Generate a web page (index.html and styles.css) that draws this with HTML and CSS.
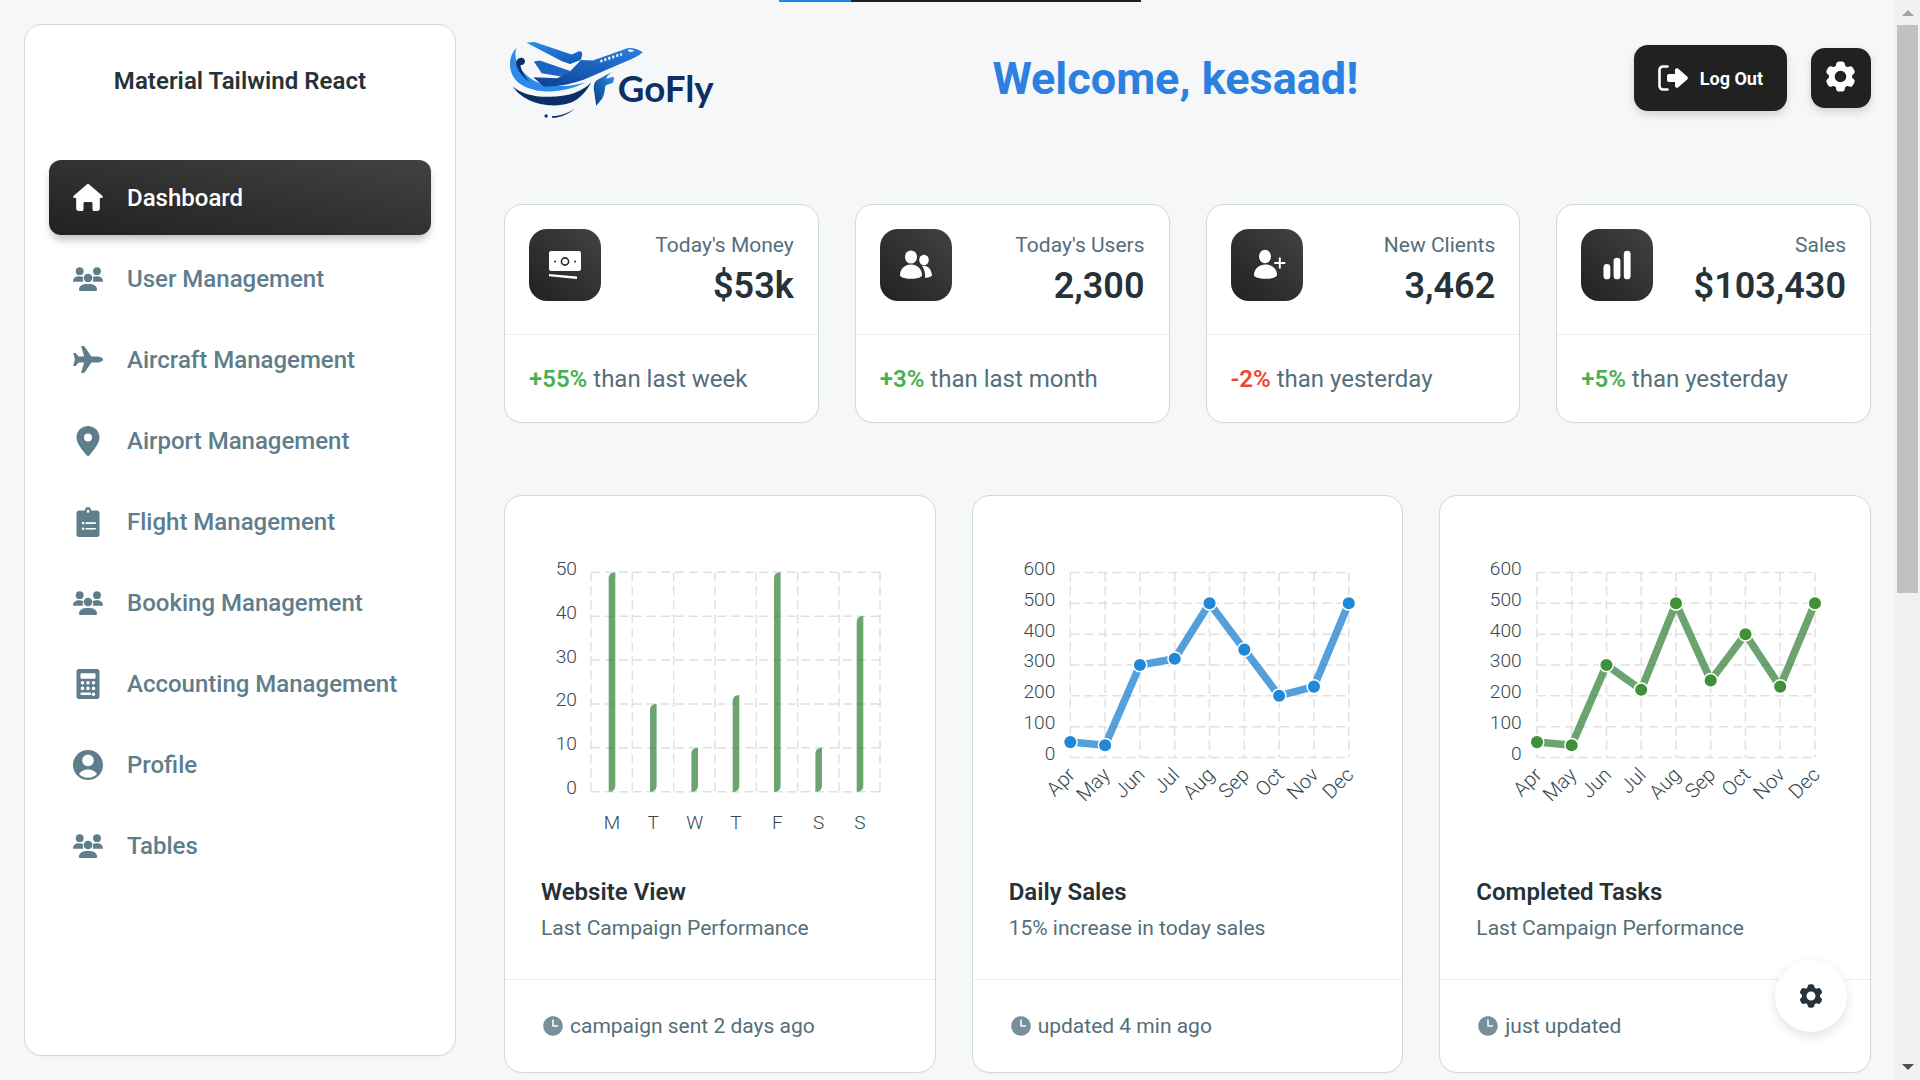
FILE: index.html
```html
<!DOCTYPE html>
<html lang="en">
<head>
<meta charset="utf-8">
<title>GoFly Dashboard</title>
<link rel="stylesheet" href="styles.css">
</head>
<body>
<svg class="defs" width="0" height="0" aria-hidden="true">
  <defs>
    <symbol id="i-users" viewBox="0 0 30 24">
      <circle cx="6.7" cy="4.2" r="3.9"/><circle cx="24" cy="4.2" r="3.9"/><circle cx="15" cy="11" r="4.3"/>
      <path d="M0 14.7C0 11 2.5 9.3 6.5 9.3c1.6 0 2.9.3 3.9.9-.8 1.2-.9 3.2-.1 4.5-.3 0-.5.1-.8.1H.7c-.4 0-.7 0-.7-.1z"/>
      <path d="M30 14.7C30 11 27.500 9.300 23.500 9.300c-1.600 0-2.900.3-3.900.9.8 1.200.9 3.200.1 4.500.3 0 .5.1.8.1h8.800c.4 0 .7 0 .7-.1z"/>
      <path d="M6 22.800C6 19 9 17 15 17s9 2 9 5.800c0 .8-.5 1.200-1.200 1.200H7.200C6.500 24 6 23.600 6 22.800z"/>
    </symbol>
    <symbol id="i-gear" viewBox="2 2 20 20">
      <path fill-rule="evenodd" d="M11.078 2.250c-.917 0-1.699.663-1.850 1.567L9.050 4.889c-.02.12-.115.26-.297.348a7.493 7.493 0 00-.986.57c-.166.115-.334.126-.45.083L6.300 5.508a1.875 1.875 0 00-2.282.819l-.922 1.597a1.875 1.875 0 00.432 2.385l.84.692c.095.078.17.229.154.43a7.598 7.598 0 000 1.139c.015.2-.059.352-.153.43l-.841.692a1.875 1.875 0 00-.432 2.385l.922 1.597a1.875 1.875 0 002.282.818l1.019-.382c.115-.043.283-.031.45.082.312.214.641.405.985.57.182.088.277.228.297.35l.178 1.071c.151.904.933 1.567 1.850 1.567h1.844c.916 0 1.699-.663 1.850-1.567l.178-1.072c.02-.12.114-.26.297-.349.344-.165.673-.356.985-.57.167-.114.335-.125.45-.082l1.020.382a1.875 1.875 0 002.280-.819l.923-1.597a1.875 1.875 0 00-.432-2.385l-.84-.692c-.095-.078-.17-.229-.154-.43a7.614 7.614 0 000-1.139c-.016-.2.059-.352.153-.43l.84-.692c.708-.582.891-1.590.433-2.385l-.922-1.597a1.875 1.875 0 00-2.282-.818l-1.020.382c-.114.043-.282.031-.449-.083a7.490 7.490 0 00-.985-.57c-.183-.087-.277-.227-.297-.348l-.179-1.072a1.875 1.875 0 00-1.850-1.567h-1.843zM12 15.750a3.750 3.750 0 100-7.500 3.750 3.750 0 000 7.500z"/>
    </symbol>
    <symbol id="i-clock" viewBox="2 2 20 20">
      <path fill-rule="evenodd" d="M12 2.250c-5.385 0-9.750 4.365-9.750 9.750s4.365 9.750 9.750 9.750 9.750-4.365 9.750-9.750S17.385 2.250 12 2.250zM12.750 6a.75.75 0 00-1.500 0v6c0 .414.336.75.75.75h4.500a.75.75 0 000-1.500h-3.750V6z"/>
    </symbol>
    <linearGradient id="lg-wing" x1="0" y1="0" x2="1" y2="1"><stop offset="0" stop-color="#2f8fea"/><stop offset="1" stop-color="#0f56b3"/></linearGradient>
    <linearGradient id="lg-body" x1="1" y1="0" x2="0" y2="1"><stop offset="0" stop-color="#2a80e2"/><stop offset="1" stop-color="#0b3f92"/></linearGradient>
    <linearGradient id="lg-fin" x1="1" y1="0" x2="0" y2="1"><stop offset="0" stop-color="#2f8fea"/><stop offset="1" stop-color="#0b3f8a"/></linearGradient>
  </defs>
</svg>

<div class="progress"><span class="progress-blue"></span><span class="progress-black"></span></div>

<div class="app">
  <div class="page">
    <aside class="sidebar">
      <h2 class="brand">Material Tailwind React</h2>
      <nav class="nav">
        <a class="nav-item active">
          <svg class="nav-icon" width="30" height="27" viewBox="0 0 30 27"><path d="M13.800.5c.7-.6 1.700-.6 2.400 0l13.100 11.200c.9.800.4 2.300-.8 2.300h-1.700v10.500c0 1.400-1.100 2.500-2.500 2.500h-3.400c-.8 0-1.400-.6-1.400-1.400v-6.100c0-.9-.7-1.600-1.600-1.600h-5.800c-.9 0-1.600.7-1.600 1.600v6.100c0 .8-.6 1.400-1.400 1.400H5.700c-1.400 0-2.500-1.100-2.500-2.500V14H1.500C.3 14-.2 12.500.7 11.700z"/></svg>
          <span>Dashboard</span>
        </a>
        <a class="nav-item"><svg class="nav-icon" width="30" height="24"><use href="#i-users"/></svg><span>User Management</span></a>
        <a class="nav-item">
          <svg class="nav-icon" width="30" height="27" viewBox="0 0 30 27"><path d="M30 13.500c0-2-3.700-3.100-6.700-3.100h-4.900L11.600.6C11.300.2 11 0 10.500 0H8.100l3 10.400H5.700L2.700 6.900H.2l1.700 6.600L.2 20.100h2.500l3-3.500h5.400l-3 10.400h2.400c.5 0 .8-.2 1.100-.6l6.800-9.800h4.900c3 0 6.700-1.100 6.700-3.100z"/></svg>
          <span>Aircraft Management</span>
        </a>
        <a class="nav-item">
          <svg class="nav-icon" width="23" height="30" viewBox="0 0 23 30"><path fill-rule="evenodd" d="M11.500 0C5.100 0 0 5.100 0 11.400c0 6.300 6.600 13.300 10.100 17.900.7.900 2.100.9 2.800 0C16.400 24.700 23 17.700 23 11.400 23 5.100 17.900 0 11.500 0zm0 15.400a4 4 0 110-8 4 4 0 010 8z"/></svg>
          <span>Airport Management</span>
        </a>
        <a class="nav-item">
          <svg class="nav-icon" width="23" height="30" viewBox="0 0 23 30"><path fill-rule="evenodd" d="M8.200 3.500C8.600 1.500 9.900 0 11.500 0s2.900 1.500 3.300 3.500h5.700c1.400 0 2.500 1.100 2.500 2.500v21.500c0 1.400-1.100 2.500-2.500 2.500h-18C1.100 30 0 28.900 0 27.500V6c0-1.400 1.100-2.500 2.500-2.500zM11.500 2.800a1.500 1.500 0 100 3 1.500 1.500 0 000-3zM9 15.300h10.300v1.600H9zm0 5.700h10.300v1.600H9zM5.300 16.100a1.300 1.300 0 102.600 0 1.300 1.300 0 00-2.600 0zm0 5.700a1.300 1.300 0 102.600 0 1.300 1.300 0 00-2.600 0z"/></svg>
          <span>Flight Management</span>
        </a>
        <a class="nav-item"><svg class="nav-icon" width="30" height="24"><use href="#i-users"/></svg><span>Booking Management</span></a>
        <a class="nav-item">
          <svg class="nav-icon" width="23" height="30" viewBox="0 0 23 30"><path fill-rule="evenodd" d="M2.500 0h18C21.900 0 23 1.100 23 2.500v25c0 1.400-1.100 2.500-2.500 2.500h-18C1.100 30 0 28.900 0 27.500v-25C0 1.100 1.100 0 2.500 0zM5 4.300c-.6 0-1 .4-1 1v3.400c0 .6.400 1 1 1h13c.6 0 1-.4 1-1V5.300c0-.6-.4-1-1-1zM6 12a1.800 1.800 0 100 3.600A1.800 1.800 0 006 12zm5.500 0a1.800 1.800 0 100 3.600 1.800 1.800 0 000-3.600zm5.500 0a1.800 1.800 0 100 3.600 1.800 1.800 0 000-3.600zM6 17.600a1.800 1.800 0 100 3.600 1.800 1.800 0 000-3.600zm5.500 0a1.800 1.800 0 100 3.600 1.800 1.800 0 000-3.600zm5.500 0a1.800 1.800 0 100 3.600 1.800 1.800 0 000-3.600zM5 23.400c-.6 0-1 .4-1 1v.6c0 .6.400 1 1 1h8.500c.6 0 1-.4 1-1v-.6c0-.6-.4-1-1-1zm12 0a1.800 1.800 0 100 3.600 1.800 1.800 0 000-3.600z"/></svg>
          <span>Accounting Management</span>
        </a>
        <a class="nav-item">
          <svg class="nav-icon" width="30" height="30" viewBox="2.250 2.250 19.500 19.500"><path fill-rule="evenodd" d="M18.685 19.097A9.723 9.723 0 0021.750 12c0-5.385-4.365-9.750-9.750-9.750S2.250 6.615 2.250 12a9.723 9.723 0 003.065 7.097A9.716 9.716 0 0012 21.750a9.716 9.716 0 006.685-2.653zm-12.540-1.285A7.486 7.486 0 0112 15a7.486 7.486 0 015.855 2.812A8.224 8.224 0 0112 20.250a8.224 8.224 0 01-5.855-2.438zM15.750 9a3.750 3.750 0 11-7.500 0 3.750 3.750 0 017.500 0z"/></svg>
          <span>Profile</span>
        </a>
        <a class="nav-item"><svg class="nav-icon" width="30" height="24"><use href="#i-users"/></svg><span>Tables</span></a>
      </nav>
    </aside>

    <main class="main">
      <header class="topbar">
        <svg class="logo" width="213" height="81" viewBox="42 112 638 244" role="img" aria-label="GoFly logo">
          <path fill="#2c8bea" d="M78 142C50 168 48 226 95 254c52 30 135 22 190-9-58 18-125 16-163-10C84 208 66 172 78 142z"/>
          <path fill="#0c2f68" d="M67 258c25 42 103 72 173 49 30-12 50-36 63-62-25 28-72 45-132 44-46 0-80-10-104-31z"/>
          <path fill="#0c2f68" d="M88 172c10-2 17 5 15 13-2 7-9 10-13 8 1 18 14 38 30 52-22-12-38-34-43-54-1-10 3-17 11-19z"/>
          <circle fill="#0c2f68" cx="167" cy="347" r="5"/>
          <path fill="#0c2f68" d="M185 347c25-1 48-8 68-23-17 16-40 27-67 29z"/>
          <path fill="url(#lg-wing)" d="M108 126l24-2 112 38 22-10c8-2 12 6 9 14l-4 12-32 12-24-8z"/>
          <path fill="#1b66c2" d="M130 183l18-3 94 32-16 18-72-12z"/>
          <path fill="url(#lg-body)" d="M458 155c-8-8-28-14-44-13L308 180l-36-2-36 38-36 17-72-3 32 28c40 2 80-6 120-20l120-52c26-10 46-20 58-31z"/>
          <path fill="#fff" d="M330 178l6-2 1 8-6 2zm12-4l6-2 1 8-6 2zm12-4l6-2 1 8-6 2zm12-4l6-2 1 8-6 2zm12-4l6-2 1 8-6 2zm12-3l5-2 1 8-5 2zM414 147c6-2 14 0 18 5l-14 2c-3-2-5-4-4-7z"/>
          <path fill="url(#lg-fin)" d="M366 214l-44 24c-10 6-12 16-11 30l7 48 18-22c7-12 8-27 10-39l22-8c4-8 4-14 2-18l-22 6c3-8 10-15 18-21z"/>
          <text class="logo-text" x="383" y="305" textLength="289" lengthAdjust="spacingAndGlyphs">GoFly</text>
        </svg>
        <h1 class="welcome">Welcome, kesaad!</h1>
        <div class="actions">
          <button class="btn-logout">
            <svg width="30" height="26" viewBox="0 0 30 26"><path d="M9.500 1.500H5A3.500 3.500 0 001.500 5v16A3.500 3.500 0 005 24.500h4.500" fill="none" stroke="#fff" stroke-width="2.600" stroke-linecap="round"/><path fill="#fff" d="M17 5c0-1.600 1.800-2.400 3-1.400l9.200 8c.9.800.9 2 0 2.800l-9.200 8c-1.200 1-3 .2-3-1.400v-4H11c-1.100 0-2-.9-2-2v-4c0-1.100.9-2 2-2h6z"/></svg>
            <span>Log Out</span>
          </button>
          <button class="btn-gear"><svg width="31" height="31"><use href="#i-gear"/></svg></button>
        </div>
      </header>

      <section class="stats">
        <article class="stat">
          <div class="stat-top">
            <div class="stat-icon"><svg width="72" height="72" viewBox="0 0 72 72"><rect x="20" y="22" width="32" height="20" rx="2" fill="#fff"/><circle cx="36" cy="32.500" r="3.600" fill="none" stroke="#2a2a2a" stroke-width="1.600"/><circle cx="26" cy="32.500" r="1" fill="#2a2a2a"/><circle cx="46" cy="32.500" r="1" fill="#2a2a2a"/><path fill="#fff" d="M20 45l28 2.400V50L20 47.200z"/></svg></div>
            <div class="stat-text"><p class="stat-label">Today's Money</p><p class="stat-value">$53k</p></div>
          </div>
          <p class="stat-foot"><b class="up">+55%</b> than last week</p>
        </article>
        <article class="stat">
          <div class="stat-top">
            <div class="stat-icon"><svg width="72" height="72" viewBox="0 0 72 72" fill="#fff"><ellipse cx="31" cy="28" rx="6" ry="6.600"/><ellipse cx="44" cy="31" rx="4.800" ry="5.200"/><path d="M20 46c0-6 5-10.500 11-10.500S42 40 42 46c0 2-4 3.800-11 3.800S20 48 20 46z"/><path d="M42 37c5-1.500 9 2 10 9 0 1.500-3 2.700-7 2.800 .6-4-.4-8.500-3-11.800z"/></svg></div>
            <div class="stat-text"><p class="stat-label">Today's Users</p><p class="stat-value">2,300</p></div>
          </div>
          <p class="stat-foot"><b class="up">+3%</b> than last month</p>
        </article>
        <article class="stat">
          <div class="stat-top">
            <div class="stat-icon"><svg width="72" height="72" viewBox="0 0 72 72" fill="#fff"><ellipse cx="34" cy="27.500" rx="6" ry="6.800"/><path d="M23 46c0-6 5-10.500 11.500-10.500S46 40 46 46c0 2-4.500 3.800-11.500 3.800S23 48 23 46z"/><path d="M47.800 28.500h2v4.500h4.500v2h-4.500v4.500h-2V35h-4.500v-2h4.500z"/></svg></div>
            <div class="stat-text"><p class="stat-label">New Clients</p><p class="stat-value">3,462</p></div>
          </div>
          <p class="stat-foot"><b class="down">-2%</b> than yesterday</p>
        </article>
        <article class="stat">
          <div class="stat-top">
            <div class="stat-icon"><svg width="72" height="72" viewBox="0 0 72 72" fill="#fff"><rect x="22.500" y="35" width="6.800" height="15.300" rx="3.400"/><rect x="32.600" y="28.700" width="6.800" height="21.600" rx="3.400"/><rect x="42.800" y="21.700" width="6.800" height="28.600" rx="3.400"/></svg></div>
            <div class="stat-text"><p class="stat-label">Sales</p><p class="stat-value">$103,430</p></div>
          </div>
          <p class="stat-foot"><b class="up">+5%</b> than yesterday</p>
        </article>
      </section>

      <section class="charts">
        <article class="chart-card">
          <svg class="chart" width="429" height="364" viewBox="505 496 429 364">
            <path class="grid" d="M591 572.300H880M591 616.200H880M591 660.100H880M591 703.900H880M591 747.800H880M591 791.700H880M591 572.300V791.700M632.300 572.300V791.700M673.700 572.300V791.700M715 572.300V791.700M756.300 572.300V791.700M797.700 572.300V791.700M839 572.300V791.700M880 572.300V791.700"/>
            <g class="bars">
              <path d="M608.700 791.700V578.300Q608.700 572.300 615.300 572.300V785.700Q615.300 791.700 608.700 791.700Z"/>
              <path d="M650 791.700V710Q650 704 656.600 704V785.700Q656.600 791.700 650 791.700Z"/>
              <path d="M691.400 791.700V753.800Q691.400 747.800 698 747.800V785.700Q698 791.700 691.400 791.700Z"/>
              <path d="M732.700 791.700V701Q732.700 695 739.300 695V785.700Q739.300 791.700 732.700 791.700Z"/>
              <path d="M774 791.700V578.300Q774 572.300 780.600 572.300V785.700Q780.600 791.700 774 791.700Z"/>
              <path d="M815.400 791.700V753.800Q815.400 747.800 822 747.800V785.700Q822 791.700 815.400 791.700Z"/>
              <path d="M856.700 791.700V622.100Q856.700 616.100 863.300 616.100V785.700Q863.300 791.700 856.700 791.700Z"/>
            </g>
            <g class="y-lab">
              <text x="577" y="574.500">50</text><text x="577" y="618.500">40</text><text x="577" y="662.500">30</text><text x="577" y="706">20</text><text x="577" y="750">10</text><text x="577" y="794">0</text>
            </g>
            <g class="x-lab">
              <text x="612" y="829">M</text><text x="653.300" y="829">T</text><text x="694.700" y="829">W</text><text x="736" y="829">T</text><text x="777.300" y="829">F</text><text x="818.700" y="829">S</text><text x="860" y="829">S</text>
            </g>
          </svg>
          <div class="chart-body"><h3 class="chart-title">Website View</h3><p class="chart-sub">Last Campaign Performance</p></div>
          <p class="chart-foot"><svg width="20" height="20"><use href="#i-clock"/></svg><span>campaign sent 2 days ago</span></p>
        </article>

        <article class="chart-card">
          <svg class="chart" width="429" height="364" viewBox="972.670 496 429 364">
            <path class="grid" d="M1070 572.500H1348.400M1070 603.300H1348.400M1070 634.200H1348.400M1070 665H1348.400M1070 695.800H1348.400M1070 726.700H1348.400M1070 757.500H1348.400M1070 572.500V757.500M1104.800 572.500V757.500M1139.600 572.500V757.500M1174.400 572.500V757.500M1209.200 572.500V757.500M1244 572.500V757.500M1278.800 572.500V757.500M1313.600 572.500V757.500M1348.400 572.500V757.500"/>
            <polyline class="line blue" points="1070,742.100 1104.800,745.200 1139.600,665 1174.400,658.800 1209.200,603.300 1244,649.600 1278.800,695.800 1313.600,686.600 1348.400,603.300"/>
            <g class="dots blue-dots">
              <circle cx="1070" cy="742.100" r="6.800"/><circle cx="1104.800" cy="745.200" r="6.800"/><circle cx="1139.600" cy="665" r="6.800"/><circle cx="1174.400" cy="658.800" r="6.800"/><circle cx="1209.200" cy="603.300" r="6.800"/><circle cx="1244" cy="649.600" r="6.800"/><circle cx="1278.800" cy="695.800" r="6.800"/><circle cx="1313.600" cy="686.600" r="6.800"/><circle cx="1348.400" cy="603.300" r="6.800"/>
            </g>
            <g class="y-lab">
              <text x="1055" y="574.500">600</text><text x="1055" y="605.500">500</text><text x="1055" y="636.500">400</text><text x="1055" y="667">300</text><text x="1055" y="698">200</text><text x="1055" y="729">100</text><text x="1055" y="759.500">0</text>
            </g>
            <g class="r-lab">
              <text x="1076" y="776" transform="rotate(-45 1076 776)">Apr</text><text x="1110.800" y="776" transform="rotate(-45 1110.800 776)">May</text><text x="1145.600" y="776" transform="rotate(-45 1145.600 776)">Jun</text><text x="1180.400" y="776" transform="rotate(-45 1180.400 776)">Jul</text><text x="1215.200" y="776" transform="rotate(-45 1215.200 776)">Aug</text><text x="1250" y="776" transform="rotate(-45 1250 776)">Sep</text><text x="1284.800" y="776" transform="rotate(-45 1284.800 776)">Oct</text><text x="1319.600" y="776" transform="rotate(-45 1319.600 776)">Nov</text><text x="1354.400" y="776" transform="rotate(-45 1354.400 776)">Dec</text>
            </g>
          </svg>
          <div class="chart-body"><h3 class="chart-title">Daily Sales</h3><p class="chart-sub">15% increase in today sales</p></div>
          <p class="chart-foot"><svg width="20" height="20"><use href="#i-clock"/></svg><span>updated 4 min ago</span></p>
        </article>

        <article class="chart-card">
          <svg class="chart" width="429" height="364" viewBox="1440.330 496 429 364">
            <path class="grid" d="M1537.300 572.500H1815.300M1537.300 603.300H1815.300M1537.300 634.200H1815.300M1537.300 665H1815.300M1537.300 695.800H1815.300M1537.300 726.700H1815.300M1537.300 757.500H1815.300M1537.300 572.500V757.500M1572 572.500V757.500M1606.800 572.500V757.500M1641.500 572.500V757.500M1676.300 572.500V757.500M1711 572.500V757.500M1745.800 572.500V757.500M1780.500 572.500V757.500M1815.300 572.500V757.500"/>
            <polyline class="line green" points="1537.300,742.100 1572,745.200 1606.800,665 1641.500,689.700 1676.300,603.300 1711,680.400 1745.800,634.200 1780.500,686.600 1815.300,603.300"/>
            <g class="dots green-dots">
              <circle cx="1537.300" cy="742.100" r="6.800"/><circle cx="1572" cy="745.200" r="6.800"/><circle cx="1606.800" cy="665" r="6.800"/><circle cx="1641.500" cy="689.700" r="6.800"/><circle cx="1676.300" cy="603.300" r="6.800"/><circle cx="1711" cy="680.400" r="6.800"/><circle cx="1745.800" cy="634.200" r="6.800"/><circle cx="1780.500" cy="686.600" r="6.800"/><circle cx="1815.300" cy="603.300" r="6.800"/>
            </g>
            <g class="y-lab">
              <text x="1522" y="574.500">600</text><text x="1522" y="605.500">500</text><text x="1522" y="636.500">400</text><text x="1522" y="667">300</text><text x="1522" y="698">200</text><text x="1522" y="729">100</text><text x="1522" y="759.500">0</text>
            </g>
            <g class="r-lab">
              <text x="1543.300" y="776" transform="rotate(-45 1543.300 776)">Apr</text><text x="1578" y="776" transform="rotate(-45 1578 776)">May</text><text x="1612.800" y="776" transform="rotate(-45 1612.800 776)">Jun</text><text x="1647.500" y="776" transform="rotate(-45 1647.500 776)">Jul</text><text x="1682.300" y="776" transform="rotate(-45 1682.300 776)">Aug</text><text x="1717" y="776" transform="rotate(-45 1717 776)">Sep</text><text x="1751.800" y="776" transform="rotate(-45 1751.800 776)">Oct</text><text x="1786.500" y="776" transform="rotate(-45 1786.500 776)">Nov</text><text x="1821.300" y="776" transform="rotate(-45 1821.300 776)">Dec</text>
            </g>
          </svg>
          <div class="chart-body"><h3 class="chart-title">Completed Tasks</h3><p class="chart-sub">Last Campaign Performance</p></div>
          <p class="chart-foot"><svg width="20" height="20"><use href="#i-clock"/></svg><span>just updated</span></p>
        </article>
      </section>
    </main>
  </div>

  <div class="scrollbar">
    <span class="arrow-up"></span>
    <span class="thumb"></span>
    <span class="track-fill"></span>
    <span class="arrow-down"></span>
  </div>
</div>

<button class="fab"><svg width="24" height="24"><use href="#i-gear"/></svg></button>
</body>
</html>
```
FILE: styles.css
```css
* { box-sizing: border-box; }
html, body { margin: 0; height: 1080px; overflow: hidden; }
body { font-family: Roboto, "Liberation Sans", sans-serif; background: #f5f7f9; color: #263238; }
h1, h2, h3, p { margin: 0; }
.defs { display: block; height: 0; }

.progress { position: fixed; top: 0; left: 779px; display: flex; height: 2px; }
.progress-blue { width: 72px; background: #1e88e5; }
.progress-black { width: 290px; background: #212121; }

.app { display: flex; height: 1080px; }
.page { flex: 1; display: flex; gap: 48px; padding: 24px; min-width: 0; }

.sidebar { flex: 0 0 432px; height: 1032px; background: #fff; border: 1px solid #cfd8dc; border-radius: 18px; padding: 38px 24px 0; box-shadow: 0 1px 2px rgba(0,0,0,.03); }
.brand { font-size: 24px; font-weight: 600; line-height: 36px; text-align: center; margin-bottom: 61px; color: #263238; letter-spacing: .05px; }
.nav { display: flex; flex-direction: column; gap: 6px; }
.nav-item { display: flex; align-items: center; height: 75px; padding-left: 24px; border-radius: 12px; font-size: 24px; font-weight: 500; color: #607d8b; fill: #607d8b; }
.nav-icon { flex: 0 0 30px; overflow: visible; }
.nav-item span { margin-left: 24px; }
.nav-item.active { background: linear-gradient(to top right, #212121, #424242); color: #fff; fill: #fff; box-shadow: 0 6px 10px -2px rgba(0,0,0,.28); }

.main { flex: 1; min-width: 0; }
.topbar { display: flex; align-items: center; justify-content: space-between; height: 108px; margin-bottom: 72px; }
.logo { display: block; }
.logo-text { font-family: Lato, "Noto Sans", sans-serif; font-weight: 700; font-size: 112px; fill: #0c2f68; }
.welcome { font-size: 45px; font-weight: 700; line-height: 60px; margin-top: 2px; color: #2b80e0; }
.actions { display: flex; align-items: center; gap: 24px; }
.btn-logout { display: flex; align-items: center; gap: 12px; height: 66px; padding: 0 24px; border: 0; border-radius: 14px; background: #212121; color: #fff; font: 700 18px Roboto, sans-serif; box-shadow: 0 4px 8px rgba(0,0,0,.15); }
.btn-gear { display: flex; align-items: center; justify-content: center; width: 60px; height: 60px; padding: 0 0 3px; border: 0; border-radius: 14px; background: #212121; fill: #fff; box-shadow: 0 4px 8px rgba(0,0,0,.15); }

.stats { display: grid; grid-template-columns: repeat(4, 1fr); gap: 36px; margin-bottom: 72px; }
.stat { height: 219px; background: #fff; border: 1px solid #cfd8dc; border-radius: 18px; box-shadow: 0 1px 2px rgba(0,0,0,.03); }
.stat-top { display: flex; justify-content: space-between; height: 130px; padding: 24px; border-bottom: 1px solid #eceff1; }
.stat-icon { width: 72px; height: 72px; border-radius: 18px; background: linear-gradient(to top right, #212121, #424242); }
.stat-icon svg { display: block; }
.stat-text { text-align: right; padding-top: 1px; }
.stat-label { font-size: 21px; line-height: 30px; color: #546e7a; }
.stat-value { font-size: 36px; font-weight: 600; line-height: 50px; margin-top: 1px; color: #263238; }
.stat-foot { padding: 1px 24px 0; font-size: 24px; line-height: 86px; height: 87px; color: #546e7a; }
.stat-foot b { font-weight: 600; }
.up { color: #4caf50; }
.down { color: #f44336; }

.charts { display: grid; grid-template-columns: repeat(3, 1fr); gap: 36px; }
.chart-card { height: 578px; background: #fff; border: 1px solid #cfd8dc; border-radius: 18px; box-shadow: 0 1px 2px rgba(0,0,0,.03); overflow: hidden; }
.chart { display: block; }
.grid { fill: none; stroke: #e0e0e0; stroke-width: 1.5; stroke-dasharray: 9 5; }
.bars path { fill: #2e7d32; opacity: .7; }
.y-lab text { font-size: 19.200px; font-weight: 300; fill: #37474f; text-anchor: end; }
.x-lab text { font-size: 19px; font-weight: 300; fill: #37474f; text-anchor: middle; }
.r-lab text { font-size: 20px; font-weight: 300; fill: #37474f; text-anchor: end; }
.line { fill: none; stroke-width: 7.500; stroke-linejoin: miter; }
.line.blue { stroke: #1a80d0; opacity: .75; }
.line.green { stroke: #2e7d32; opacity: .7; }
.dots circle { stroke: #fff; stroke-width: 1.500; }
.blue-dots circle { fill: #2188d8; }
.green-dots circle { fill: #40903a; }
.chart-body { height: 120px; padding: 15px 36px 0; border-bottom: 1px solid #eceff1; }
.chart-title { font-size: 24px; font-weight: 600; line-height: 35px; color: #263238; }
.chart-sub { font-size: 21px; line-height: 36px; color: #546e7a; }
.chart-foot { display: flex; align-items: center; gap: 7px; height: 92px; padding: 0 36px 0 38px; font-size: 21px; color: #546e7a; fill: #78909c; }

.scrollbar { flex: 0 0 25px; display: flex; flex-direction: column; align-items: center; height: 1080px; background: #f1f1f1; }
.arrow-up { width: 0; height: 0; margin-top: 10px; border: 6px solid transparent; border-top: 0; border-bottom-color: #a3a3a3; margin-bottom: 9px; }
.thumb { width: 21px; height: 568px; background: #c1c1c1; }
.track-fill { flex: 1; }
.arrow-down { width: 0; height: 0; margin-bottom: 10px; border: 6px solid transparent; border-bottom: 0; border-top-color: #505050; }

.fab { position: fixed; left: 1775px; top: 960px; display: flex; align-items: center; justify-content: center; width: 72px; height: 72px; padding: 0; border: 0; border-radius: 50%; background: #fff; fill: #263238; box-shadow: 0 4px 12px rgba(0,0,0,.12); }
```
